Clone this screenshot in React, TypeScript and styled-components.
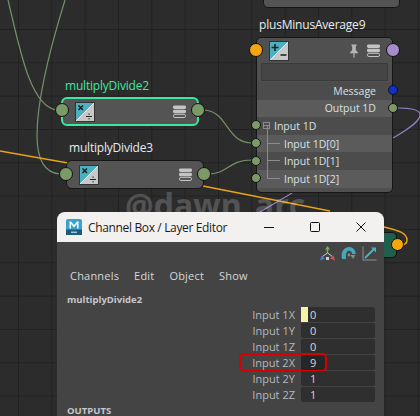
import styled, { createGlobalStyle } from 'styled-components';

const GlobalStyle = createGlobalStyle`
  html, body {
    margin: 0;
    padding: 0;
    background: #2b2b2b;
  }
  #root {
    width: 420px;
    height: 416px;
  }
`;

const FONT = `'Open Sans', 'Noto Sans', sans-serif`;

const NodeIcon = ({ kind }: { kind: 'multiply' | 'plus' }) => (
  <IconBox width="20" height="20" viewBox="0 0 20 20">
    <rect x="0.5" y="0.5" width="19" height="19" fill="#c8c8c8" stroke="#333" />
    <path d="M1 1H19L1 19Z" fill="#4bb0c0" />
    <path d="M1 19L19 1" stroke="#eee" strokeWidth="1" />
    {kind === 'multiply' ? (
      <>
        <path d="M3.5 3.5L8 8M8 3.5L3.5 8" stroke="#222" strokeWidth="1.6" />
        <path d="M11 14.5H17" stroke="#222" strokeWidth="1" />
        <rect x="13.5" y="11.5" width="1.2" height="1.2" fill="#222" />
        <rect x="13.5" y="16.2" width="1.2" height="1.2" fill="#222" />
      </>
    ) : (
      <>
        <path d="M2.5 6.5H9.5M6 3V10" stroke="#222" strokeWidth="1.6" />
        <path d="M11.5 14H17.5" stroke="#222" strokeWidth="1.6" />
      </>
    )}
  </IconBox>
);

const StackIcon = () => (
  <svg width="13" height="13" viewBox="0 0 13 13">
    <rect x="0" y="0.5" width="13" height="3.4" rx="1.4" fill="#c4c4c4" />
    <rect x="0" y="4.8" width="13" height="3.4" rx="1.4" fill="#c4c4c4" />
    <rect x="0.5" y="9.3" width="12" height="3.2" rx="1.4" fill="none" stroke="#c4c4c4" />
  </svg>
);

const PinIcon = () => (
  <svg width="10" height="14" viewBox="0 0 10 14">
    <path d="M2.5 0.5H7.5V1.8L6.8 2.4V6L9 8.4V9.2H5.6V13.5H4.4V9.2H1V8.4L3.2 6V2.4L2.5 1.8Z" fill="#b5b5b5" />
  </svg>
);

const MayaIcon = () => (
  <svg width="16" height="16" viewBox="0 0 16 16">
    <rect width="16" height="16" rx="2" fill="#38a3cf" />
    <rect y="10.5" width="16" height="5.5" fill="#1c5a78" />
    <path d="M3.5 9.5V2.5H5L8 6L11 2.5H12.5V9.5H11V5L8 8.4L5 5V9.5Z" fill="#fff" />
    <rect x="5" y="12.5" width="6" height="1.6" fill="#9cc7d8" />
  </svg>
);

const ToolIcons = () => (
  <ToolRow>
    <svg width="15" height="15" viewBox="0 0 15 15">
      <path d="M7.5 0L10 3.5H8.2V7H6.8V3.5H5Z" fill="#7cae5a" />
      <path d="M7.5 7L2.5 10.5" stroke="#ccc" />
      <path d="M7.5 7L12.5 10.5" stroke="#ccc" />
      <path d="M0 14.5L1.5 9.5L5 12.5Z" fill="#4a7fd0" />
      <path d="M15 14.5L13.5 9.5L10 12.5Z" fill="#d05050" />
      <rect x="6" y="11" width="3" height="3" fill="#ccc" />
    </svg>
    <svg width="15" height="15" viewBox="0 0 15 15">
      <path d="M1 13C-0.5 6 3 1 8 1C12 1 14.6 4 14.6 8H11C11 6 9.8 4.8 8 4.8C6 4.8 4.5 7 5 13Z" fill="#46a7b8" />
      <path d="M9.5 9H14.5L12 13Z" fill="#8a8a8a" />
      <circle cx="8" cy="9" r="1.4" fill="#8a8a8a" />
    </svg>
    <svg width="15" height="15" viewBox="0 0 15 15">
      <path d="M1 0.5V14H14.5" fill="none" stroke="#8d8d8d" />
      <path d="M3 12L12 3" stroke="#4bb0c0" strokeWidth="2" />
      <path d="M9 1.5H14V6.5Z" fill="#4bb0c0" />
    </svg>
  </ToolRow>
);

const channels = [
  { name: 'Input 1X', value: '0', keyed: true },
  { name: 'Input 1Y', value: '0' },
  { name: 'Input 1Z', value: '0' },
  { name: 'Input 2X', value: '9', marked: true },
  { name: 'Input 2Y', value: '1' },
  { name: 'Input 2Z', value: '1' },
];

const inputs = ['Input 1D[0]', 'Input 1D[1]', 'Input 1D[2]'];

const App = () => {
  return (
    <>
      <GlobalStyle />
      <Canvas>
        <Wires width="420" height="416" viewBox="0 0 420 416" fill="none">
          <path d="M8 0C20 50 30 105 56 110" stroke="#76906a" strokeWidth="1.2" />
          <path d="M65 0C48 55 37 100 37 135C37 160 45 173 60 174" stroke="#76906a" strokeWidth="1.2" />
          <path d="M204 110C228 111 226 143 252 143" stroke="#76906a" strokeWidth="1.2" />
          <path d="M208 174C228 174 228 160 252 160" stroke="#76906a" strokeWidth="1.2" />
          <path d="M0 151L68 163M203 186L330 211" stroke="#e8a317" strokeWidth="1.5" />
          <path d="M384 227C396 230 407 232 407 240C407 244 404 245 400 245" stroke="#e8a317" strokeWidth="1.5" />
          <path d="M398 108C412 108 420 110 420 115C420 122 405 131 393 138" stroke="#8f7fc0" strokeWidth="1.2" />
          <path d="M292 193L260 212" stroke="#8f7fc0" strokeWidth="1.2" />
        </Wires>

        <Watermark>@dawn_arc</Watermark>

        <TopNode />

        <FlatNode $x={61} $y={97} $selected>
          <NodeLabel $selected>multiplyDivide2</NodeLabel>
          <Port $side="left" $center={11} $size={12} $color="#7c9a68" />
          <NodeIcon kind="multiply" />
          <StackSlot><StackIcon /></StackSlot>
          <Port $side="right" $center={11} $size={12} $color="#7c9a68" />
        </FlatNode>

        <FlatNode $x={66} $y={160}>
          <NodeLabel>multiplyDivide3</NodeLabel>
          <Port $side="left" $center={13} $size={12} $color="#7c9a68" />
          <NodeIcon kind="multiply" />
          <StackSlot><StackIcon /></StackSlot>
          <Port $side="right" $center={13} $size={12} $color="#7c9a68" />
        </FlatNode>

        <AttrNode>
          <NodeLabel>plusMinusAverage9</NodeLabel>
          <Port $side="left" $center={12} $size={12} $color="#f5a50f" />
          <Port $side="right" $center={12} $size={12} $color="#a48ccb" />
          <AttrHeader>
            <NodeIcon kind="plus" />
            <HeaderIcons>
              <PinIcon />
              <StackIcon />
            </HeaderIcons>
          </AttrHeader>
          <NameField />
          <AttrRow $align="right" $shade="dark">
            Message
            <Port $side="right" $center={8.3} $size={8} $color="#1030c8" />
          </AttrRow>
          <AttrRow $align="right" $shade="light">
            Output 1D
            <Port $side="right" $center={8.3} $size={8} $color="#7c9a68" />
          </AttrRow>
          <AttrRow $shade="dark">
            <Port $side="left" $center={8.3} $size={8} $color="#7c9a68" />
            <Expander />
            Input 1D
          </AttrRow>
          {inputs.map((name, i) => (
            <AttrRow key={name} $shade={i % 2 === 0 ? 'light' : 'dark'} $child>
              <Port $side="left" $center={8.3} $size={8} $color="#7c9a68" />
              <TreeLine $last={i === inputs.length - 1} />
              {name}
            </AttrRow>
          ))}
        </AttrNode>

        <SideNode>
          <Port $side="right" $center={11} $size={11} $color="#f5a50f" />
        </SideNode>

        <Window>
          <TitleBar>
            <MayaIcon />
            <Title>Channel Box / Layer Editor</Title>
            <WindowButtons>
              <svg width="12" height="12" viewBox="0 0 12 12"><path d="M1 6.5H11" stroke="#111" /></svg>
              <svg width="12" height="12" viewBox="0 0 12 12"><rect x="1.5" y="1.5" width="9" height="9" rx="1" fill="none" stroke="#111" /></svg>
              <svg width="12" height="12" viewBox="0 0 12 12"><path d="M1.5 1.5L10.5 10.5M10.5 1.5L1.5 10.5" stroke="#111" /></svg>
            </WindowButtons>
          </TitleBar>
          <WindowBody>
            <ToolIcons />
            <MenuBar>
              <MenuItem>Channels</MenuItem>
              <MenuItem>Edit</MenuItem>
              <MenuItem>Object</MenuItem>
              <MenuItem>Show</MenuItem>
            </MenuBar>
            <SectionTitle>multiplyDivide2</SectionTitle>
            <ChannelList>
              {channels.map((c) => (
                <ChannelRow key={c.name}>
                  <ChannelName>{c.name}</ChannelName>
                  <ChannelField>
                    {c.keyed && <KeyMark />}
                    {c.marked && <ValueHighlight />}
                    <ChannelValue>{c.value}</ChannelValue>
                  </ChannelField>
                  {c.marked && <RedMark />}
                </ChannelRow>
              ))}
            </ChannelList>
            <OutputsTitle>OUTPUTS</OutputsTitle>
          </WindowBody>
        </Window>
      </Canvas>
    </>
  );
};

export default App;

const Canvas = styled.div`
  position: relative;
  width: 420px;
  height: 416px;
  overflow: hidden;
  font-family: ${FONT};
  background-color: #2c2c2c;
  background-image:
    linear-gradient(to right, #212121 1px, transparent 1px),
    linear-gradient(to bottom, #212121 1px, transparent 1px);
  background-size: 33.33px 33.33px;
  background-position: 18px 29px;
`;

const Wires = styled.svg`
  position: absolute;
  left: 0;
  top: 0;
`;

const Watermark = styled.div`
  position: absolute;
  left: 125px;
  top: 189px;
  font-size: 32px;
  line-height: 32px;
  font-weight: 700;
  color: rgba(255, 255, 255, 0.2);
  white-space: nowrap;
`;

const IconBox = styled.svg`
  flex: none;
  display: block;
`;

const TopNode = styled.div`
  position: absolute;
  left: 263px;
  top: -10px;
  width: 137px;
  height: 18px;
  background: #545454;
  border: 1px solid #161616;
  border-radius: 5px;
  box-sizing: border-box;
`;

const FlatNode = styled.div<{ $x: number; $y: number; $selected?: boolean }>`
  position: absolute;
  left: ${(p) => p.$x}px;
  top: ${(p) => p.$y}px;
  width: 138px;
  height: 29px;
  box-sizing: border-box;
  display: flex;
  align-items: center;
  padding: 0 11px 0 12px;
  background: #545454;
  border: ${(p) => (p.$selected ? '2px solid #3ce8a0' : '1px solid #161616')};
  border-radius: 6px;
`;

const StackSlot = styled.div`
  margin-left: auto;
  display: flex;
`;

const NodeLabel = styled.div<{ $selected?: boolean }>`
  position: absolute;
  left: ${(p) => (p.$selected ? 2 : 2)}px;
  top: -22px;
  font-size: 12px;
  letter-spacing: -0.2px;
  line-height: 18px;
  white-space: nowrap;
  color: ${(p) => (p.$selected ? '#3ce8a0' : '#e6ecf0')};
`;

const Port = styled.div<{ $side: 'left' | 'right'; $center: number; $size: number; $color: string }>`
  position: absolute;
  top: ${(p) => p.$center - p.$size / 2 - 1}px;
  ${(p) => p.$side}: ${(p) => -p.$size / 2 - 2}px;
  width: ${(p) => p.$size}px;
  height: ${(p) => p.$size}px;
  border-radius: 50%;
  background: ${(p) => p.$color};
  border: 1px solid #111;
`;

const AttrNode = styled.div`
  position: absolute;
  left: 256px;
  top: 37px;
  width: 137px;
  height: 156px;
  box-sizing: border-box;
  background: #505050;
  border: 1px solid #161616;
  border-radius: 5px;
  display: flex;
  flex-direction: column;
`;

const AttrHeader = styled.div`
  display: flex;
  align-items: center;
  justify-content: space-between;
  height: 25px;
  padding: 0 12px;
  box-sizing: border-box;
  flex: none;
`;

const HeaderIcons = styled.div`
  display: flex;
  align-items: center;
  gap: 8px;
`;

const NameField = styled.div`
  flex: none;
  height: 18px;
  margin: 0 4px 1px;
  background: #454545;
  border: 1px solid #3a3a3a;
  box-sizing: border-box;
`;

const AttrRow = styled.div<{ $align?: 'right'; $shade: 'dark' | 'light'; $child?: boolean }>`
  position: relative;
  flex: none;
  height: 17.6px;
  box-sizing: border-box;
  display: flex;
  align-items: center;
  justify-content: ${(p) => (p.$align === 'right' ? 'flex-end' : 'flex-start')};
  padding: ${(p) => (p.$align === 'right' ? '0 16px 0 0' : p.$child ? '0 0 0 27px' : '0 0 0 6px')};
  background: ${(p) => (p.$shade === 'dark' ? '#4c4c4c' : '#5b5b5b')};
  color: #d8e0e6;
  font-size: 10.5px;
  white-space: nowrap;
`;

const Expander = styled.div`
  width: 5px;
  height: 5px;
  margin-right: 4px;
  border: 1px solid #8c8c8c;
  background: linear-gradient(#8c8c8c, #8c8c8c) center / 100% 1px no-repeat;
`;

const TreeLine = styled.div<{ $last: boolean }>`
  position: absolute;
  left: 10px;
  top: -9px;
  width: 12px;
  height: ${(p) => (p.$last ? 18 : 27)}px;
  border-left: 1px solid #8c8c8c;
  &::after {
    content: '';
    position: absolute;
    left: 0;
    top: 17px;
    width: 12px;
    border-top: 1px solid #8c8c8c;
  }
`;

const SideNode = styled.div`
  position: absolute;
  left: 370px;
  top: 232px;
  width: 27px;
  height: 26px;
  background: #1f5f4c;
  border: 1px solid #111;
  border-radius: 5px;
  box-sizing: border-box;
`;

const Window = styled.div`
  position: absolute;
  left: 57px;
  top: 212px;
  width: 327px;
  height: 204px;
  border-radius: 8px 8px 0 0;
  overflow: hidden;
  display: flex;
  flex-direction: column;
  background: #444444;
`;

const TitleBar = styled.div`
  flex: none;
  height: 30px;
  display: flex;
  align-items: center;
  padding-left: 9px;
  background: #f3f1ef;
`;

const Title = styled.div`
  margin-left: 6px;
  font-size: 12px;
  letter-spacing: -0.35px;
  color: #1a1a1a;
  white-space: nowrap;
`;

const WindowButtons = styled.div`
  margin-left: auto;
  display: flex;
  align-items: center;
  gap: 34px;
  padding-right: 17px;
`;

const WindowBody = styled.div`
  flex: 1;
  display: flex;
  flex-direction: column;
  padding: 0 9px 0 10px;
`;

const ToolRow = styled.div`
  display: flex;
  justify-content: flex-end;
  gap: 6px;
  padding-top: 4px;
  margin-right: -2px;
  height: 22px;
  box-sizing: border-box;
`;

const MenuBar = styled.div`
  display: flex;
  gap: 15px;
  padding: 4px 0 0 3px;
  height: 20px;
  box-sizing: border-box;
`;

const MenuItem = styled.div`
  font-size: 11px;
  line-height: 16px;
  color: #d4d8dc;
  letter-spacing: 0.2px;
`;

const SectionTitle = styled.div`
  font-size: 9.5px;
  font-weight: 700;
  line-height: 14px;
  color: #c4c8cc;
  margin-top: 9px;
`;

const OutputsTitle = styled.div`
  font-size: 9.5px;
  font-weight: 700;
  line-height: 10px;
  color: #c4c8cc;
  margin-top: 4px;
`;

const ChannelList = styled.div`
  display: flex;
  flex-direction: column;
  gap: 1px;
`;

const ChannelRow = styled.div`
  position: relative;
  display: flex;
  justify-content: flex-end;
  align-items: center;
  height: 15px;
`;

const ChannelName = styled.div`
  font-size: 11px;
  color: #b4b8bc;
  margin-right: 6px;
`;

const ChannelField = styled.div`
  position: relative;
  width: 74px;
  height: 15px;
  display: flex;
  align-items: center;
  padding-left: 9px;
  box-sizing: border-box;
  border-radius: 2px;
  background: #2f2f2f;
`;

const KeyMark = styled.div`
  position: absolute;
  left: 0;
  top: 0;
  width: 7px;
  height: 15px;
  background: #f6f2a6;
`;

const ValueHighlight = styled.div`
  position: absolute;
  left: 0;
  top: 0;
  width: 25px;
  height: 15px;
  background: #262626;
  border-radius: 2px;
`;

const ChannelValue = styled.span`
  position: relative;
  font-size: 11px;
  color: #d8d8d8;
`;

const RedMark = styled.div`
  position: absolute;
  left: 172px;
  top: -2px;
  width: 88px;
  height: 19px;
  box-sizing: border-box;
  border: 2px solid #d80000;
  border-radius: 5px;
`;
